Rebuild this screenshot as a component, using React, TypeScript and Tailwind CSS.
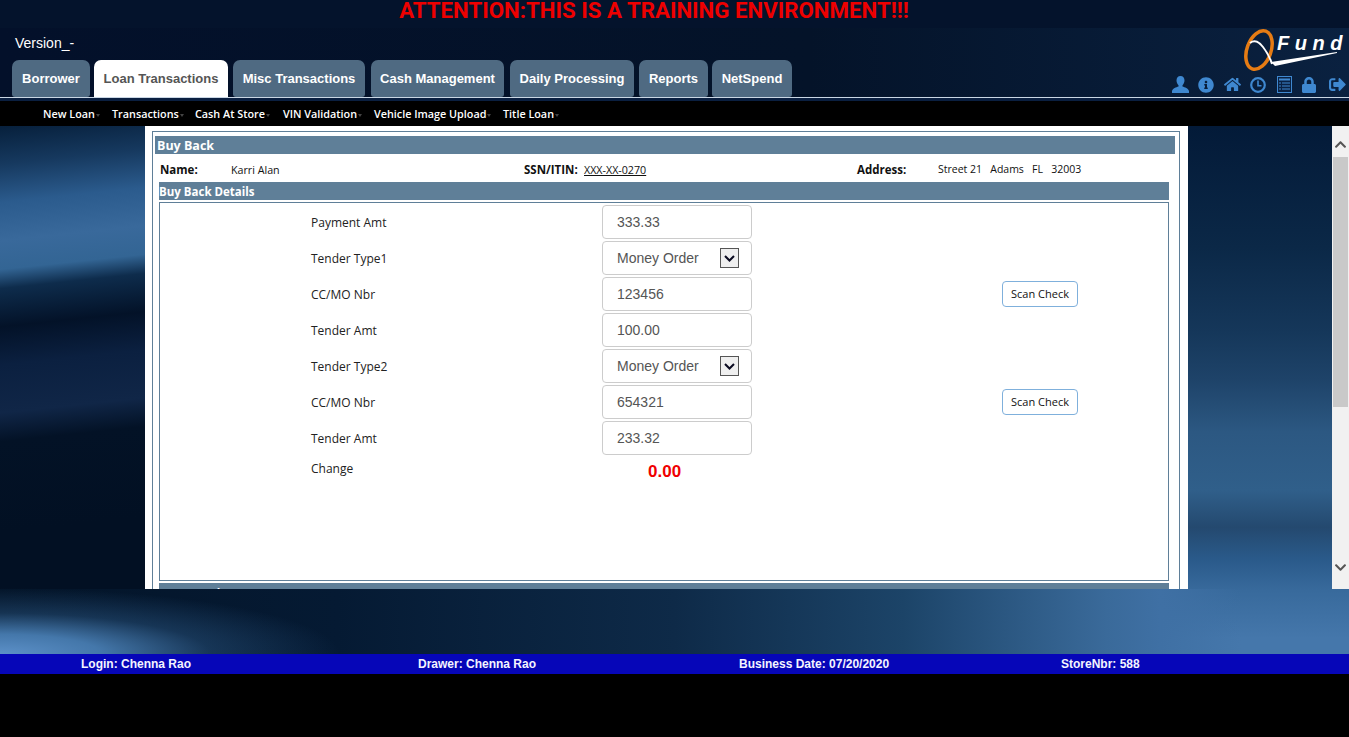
import React from "react";
import { FaInfoCircle, FaHome, FaLock, FaSignOutAlt, FaChevronUp, FaChevronDown } from "react-icons/fa";

const tabs = [
  { t: "Borrower", w: "w-[78px]", m: "mr-[4px]" },
  { t: "Loan Transactions", w: "w-[134px]", m: "mr-[5px]", active: true },
  { t: "Misc Transactions", w: "w-[132px]", m: "mr-[6px]" },
  { t: "Cash Management", w: "w-[133px]", m: "mr-[6px]" },
  { t: "Daily Processing", w: "w-[124px]", m: "mr-[5px]" },
  { t: "Reports", w: "w-[69px]", m: "mr-[4px]" },
  { t: "NetSpend", w: "w-[80px]", m: "" },
];

const subs = [
  { t: "New Loan", w: "w-[69px]" },
  { t: "Transactions", w: "w-[83px]" },
  { t: "Cash At Store", w: "w-[88px]" },
  { t: "VIN Validation", w: "w-[91px]" },
  { t: "Vehicle Image Upload", w: "w-[129px]" },
  { t: "Title Loan", w: "w-[70px]" },
];

const bodyFont = "font-['Open_Sans','Noto_Sans',sans-serif]";

function Label({ children }: { children: React.ReactNode }) {
  return <div className="w-[291px] shrink-0 text-[12px] text-[#222] leading-none pt-[2px]">{children}</div>;
}

function Field({ label, value, scan }: { label: string; value: string; scan?: boolean }) {
  return (
    <div className="flex items-center h-[34px] mb-[2px]">
      <Label>{label}</Label>
      <div className="w-[150px] h-[34px] shrink-0 border border-[#ccc] rounded-[4px] bg-white flex items-center pl-[14px] text-[14px] text-[#555] font-['Liberation_Sans',sans-serif]">
        {value}
      </div>
      {scan && (
        <button className="ml-[250px] w-[76px] h-[26px] border border-[#7fb0dc] rounded-[4px] bg-white text-[11px] text-[#111]">
          Scan Check
        </button>
      )}
    </div>
  );
}

function SelectField({ label, value }: { label: string; value: string }) {
  return (
    <div className="flex items-center h-[34px] mb-[2px]">
      <Label>{label}</Label>
      <div className="w-[150px] h-[34px] shrink-0 border border-[#ccc] rounded-[4px] bg-white flex items-center justify-between pl-[14px] pr-[12px] text-[14px] text-[#555] font-['Liberation_Sans',sans-serif]">
        <span>{value}</span>
        <span className="w-[19px] h-[20px] border border-[#555] bg-[#efefef] flex items-center justify-center">
          <svg width="11" height="7" viewBox="0 0 11 7" fill="none">
            <path d="M1 1l4.5 4.5L10 1" stroke="#0a0a20" strokeWidth="2" />
          </svg>
        </span>
      </div>
    </div>
  );
}

function Logo() {
  return (
    <div className="relative w-[104px] h-[46px]">
      <svg width="104" height="46" viewBox="0 0 104 46" className="absolute left-0 top-0">
        <ellipse cx="17" cy="23" rx="12" ry="20" transform="rotate(20 17 23)" fill="none" stroke="#e67c14" strokeWidth="3.500" />
        <path d="M8 16c5-4 9-1 13 4 4 5 7 11 9 17" fill="none" stroke="#fff" strokeWidth="2" />
        <path d="M29 35l66-10v1l-62 13z" fill="#fff" />
      </svg>
      <span className="absolute left-[35px] top-[3px] whitespace-nowrap text-[20px] leading-[26px] font-bold italic tracking-[5.500px] text-white font-['Liberation_Sans',sans-serif]">
        Fund
      </span>
    </div>
  );
}

function UserIcon() {
  return (
    <svg width="17" height="17" viewBox="0 0 17 17" fill="#3f88d0">
      <path d="M8.5 0c2.6 0 4 2 4 4.6 0 1.8-.8 3.6-2 4.6v1.3c2.4.9 5.6 1.700 6.500 4.500v2H0v-2c.9-2.800 4.100-3.600 6.500-4.500V9.200c-1.200-1-2-2.800-2-4.600C4.500 2 5.900 0 8.500 0z" />
    </svg>
  );
}

function ClockIcon() {
  return (
    <svg width="16" height="16" viewBox="0 0 16 16" fill="none" stroke="#3f88d0">
      <circle cx="8" cy="8" r="6.800" strokeWidth="2.200" />
      <path d="M8 3.500V8.700H11.500" strokeWidth="1.600" />
    </svg>
  );
}

function ListIcon() {
  return (
    <svg width="15" height="17" viewBox="0 0 15 17">
      <rect x="0.5" y="0.500" width="14" height="16" fill="#0a2244" stroke="#3f88d0" />
      <path d="M2 2.500h11V4.500H2zM2 6.500h2V7.500H2zM5 6.500h8V7.500H5zM2 9.500h2V10.500H2zM5 9.500h8V10.500H5zM2 12.500h2V13.500H2zM5 12.500h8V13.500H5z" fill="#3f88d0" />
    </svg>
  );
}

export default function App() {
  return (
    <div className={`w-[1349px] h-[737px] overflow-hidden bg-black flex flex-col ${bodyFont}`}>
      {/* header */}
      <header className="h-[98px] shrink-0 flex flex-col bg-[linear-gradient(90deg,#03102a_0%,#041329_60%,#0a2140_100%)] relative">
        <div className="h-[28px] shrink-0 flex justify-center bg-[#04132c]">
          <span className="ml-[-41px] text-[22.250px] leading-[21px] font-bold text-[#ee0000] font-['Roboto','Liberation_Sans',sans-serif]">
            ATTENTION:THIS IS A TRAINING ENVIRONMENT!!!
          </span>
        </div>
        <div className="pl-[15px] pt-[6px] h-[32px] shrink-0 text-[14px] leading-[18px] text-white font-['Liberation_Sans',sans-serif]">
          Version_-
        </div>
        <nav className="flex items-end h-[37px] pl-[12px]">
          {tabs.map((tab) => (
            <div
              key={tab.t}
              className={`${tab.w} ${tab.m} h-[37px] rounded-t-[7px] rounded-b-[3px] flex items-center justify-center text-[13px] font-bold font-['Liberation_Sans',sans-serif] ${
                tab.active ? "bg-white text-[#555] rounded-b-none" : "bg-[#4f6a82] text-white"
              }`}
            >
              {tab.t}
            </div>
          ))}
        </nav>
        <div className="absolute right-[3px] top-[27px]">
          <Logo />
        </div>
        <div className="absolute left-[1172px] top-[76px] flex items-center h-[17px] text-[#3f88d0]">
          <span className="w-[26px] flex"><UserIcon /></span>
          <span className="w-[26px] flex"><FaInfoCircle size={16} /></span>
          <span className="w-[26px] flex"><FaHome size={17} /></span>
          <span className="w-[27px] flex"><ClockIcon /></span>
          <span className="w-[24px] flex"><ListIcon /></span>
          <span className="w-[28px] flex"><FaLock size={16} /></span>
          <span className="w-[20px] flex"><FaSignOutAlt size={17} /></span>
        </div>
      </header>
      <div className="h-[1px] bg-[#c9d6e4] shrink-0 mt-[-1px] relative" />
      <div className="h-[3px] bg-[#0a1f40] shrink-0" />
      {/* sub nav */}
      <div className="h-[25px] shrink-0 bg-black flex items-center pl-[43px] pt-[1px] text-[10.800px] font-semibold text-white">
        {subs.map((s) => (
          <div key={s.t} className={`${s.w} flex items-center`}>
            <span>{s.t}</span>
            <span className="ml-[1px] mt-[3px] w-0 h-0 border-x-[2.500px] border-t-[3px] border-x-transparent border-t-[#444]" />
          </div>
        ))}
      </div>
      {/* main */}
      <main className="h-[528px] shrink-0 flex flex-col [background:radial-gradient(ellipse_340px_66px_at_0px_100%,#5c90c8_0%,#4477aa_30%,rgba(45,90,135,0.45)_62%,transparent_100%)_0_0/100%_100%_no-repeat,linear-gradient(174deg,#07203c_0%,#16395f_8%,#2b5b8d_16%,#39699b_24%,#336594_30%,#0e2c4c_34%,#031228_42%,#0b2040_50%,#102647_60%,#031226_66%,#021023_85%,#021023_100%)_0_0/146px_463px_no-repeat,linear-gradient(90deg,#031428_0%,#051a33_25%,#0e2a48_50%,#1c4468_67%,#3a6a9a_82%,#3f70a4_86%,rgba(63,112,164,0)_92%)_0_463px/100%_65px_no-repeat,linear-gradient(180deg,#031a38_0%,#0b2847_23%,#15375a_39%,#1e4369_48%,#2c5882_58%,#305f8a_69%,#24496f_76%,#2a5a8a_82%,#386a9c_88%,#4577ab_97%,#4577ab_100%)]">
        <div className="h-[463px] shrink-0 flex overflow-hidden">
          <div className="ml-[145px] w-[1043px] h-[463px] bg-white pl-[7px] pr-[8px] pt-[5px] overflow-hidden shrink-0">
            <div className="border border-[#5f7f98] pl-[2px] pr-[4px] pt-[4px] h-[600px]">
              <div className="h-[18px] bg-[#5f7f98] text-white text-[12.500px] font-bold leading-[18px] flex items-center pl-[2px] pt-[1px]">Buy Back</div>
              <div className="h-[28px] flex items-center pl-[5px] pt-[4px] text-[10.700px] text-[#111]">
                <span className="w-[71px] text-[11.500px] font-bold">Name:</span>
                <span className="w-[293px]">Karri Alan</span>
                <span className="w-[60px] text-[11.500px] font-bold">SSN/ITIN:</span>
                <span className="w-[273px] underline">XXX-XX-0270</span>
                <span className="w-[81px] text-[11.500px] font-bold">Address:</span>
                <span className="whitespace-pre text-[10.500px]">Street 21   Adams   FL   32003</span>
              </div>
              <div className="ml-[4px] mr-[6px]">
                <div className="h-[18px] bg-[#5f7f98] text-white text-[11.500px] font-bold flex items-center pt-[1px]">Buy Back Details</div>
                <div className="mt-[2px] h-[379px] border border-[#5f7f98] pt-[2px] pl-[151px]">
                  <Field label="Payment Amt" value="333.33" />
                  <SelectField label="Tender Type1" value="Money Order" />
                  <Field label="CC/MO Nbr" value="123456" scan />
                  <Field label="Tender Amt" value="100.00" />
                  <SelectField label="Tender Type2" value="Money Order" />
                  <Field label="CC/MO Nbr" value="654321" scan />
                  <Field label="Tender Amt" value="233.32" />
                  <div className="flex items-center h-[26px]">
                    <div className="w-[291px] shrink-0 text-[12px] text-[#222] leading-none mb-[2px]">Change</div>
                    <span className="ml-[46px] mt-[4px] text-[17px] font-bold text-[#f00000] font-['Liberation_Sans',sans-serif]">0.00</span>
                  </div>
                </div>
                <div className="mt-[2px] h-[18px] bg-[#5f7f98] text-white text-[11.500px] font-bold flex items-center pl-[1px] pt-[3px]">Loan Totals</div>
              </div>
            </div>
          </div>
          <div className="ml-[144px] w-[17px] h-[463px] bg-[#f1f1f1] flex flex-col items-center text-[#555] shrink-0">
            <div className="h-[31px] w-full flex items-center justify-center shrink-0 pt-[6px]"><FaChevronUp size={13} /></div>
            <div className="w-[15px] h-[250px] bg-[#c9c9c9] shrink-0" />
            <div className="flex-1 w-full flex items-end justify-center pb-[15px]"><FaChevronDown size={13} /></div>
          </div>
        </div>
      </main>
      {/* status */}
      <footer className="h-[20px] shrink-0 bg-[#0606b8] flex items-center pb-[1px] text-[12px] font-bold text-[#f4f4ff] font-['Liberation_Sans',sans-serif]">
        <span className="ml-[81px] w-[337px]">Login: Chenna Rao</span>
        <span className="w-[321px]">Drawer: Chenna Rao</span>
        <span className="w-[322px]">Business Date: 07/20/2020</span>
        <span>StoreNbr: 588</span>
      </footer>
    </div>
  );
}
